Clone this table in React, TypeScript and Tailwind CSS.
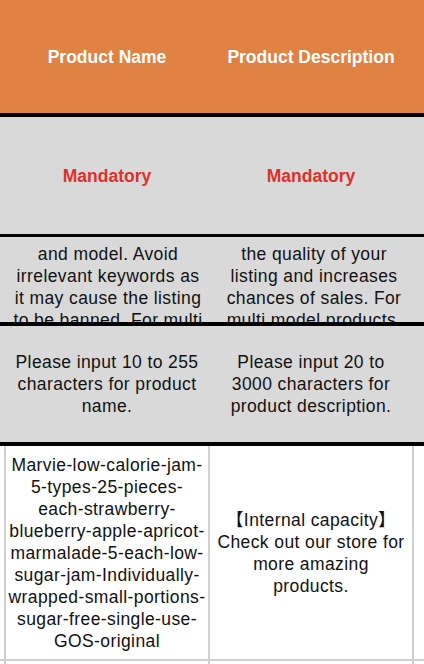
const font = "font-['Liberation_Sans','Noto_Sans_CJK_SC',sans-serif]"

const rowThree = [
  ['and model. Avoid', 'irrelevant keywords as', 'it may cause the listing', 'to be banned. For multi'],
  ['the quality of your', 'listing and increases', 'chances of sales. For', 'multi model products,']
]

const productName = [
  'Marvie-low-calorie-jam-',
  '5-types-25-pieces-',
  'each-strawberry-',
  'blueberry-apple-apricot-',
  'marmalade-5-each-low-',
  'sugar-jam-Individually-',
  'wrapped-small-portions-',
  'sugar-free-single-use-',
  'GOS-original'
]

const productDesc = ['【Internal capacity】', 'Check out our store for', 'more amazing', 'products.']

function Lines({ lines }: { lines: string[] }) {
  return (
    <div className="text-center">
      {lines.map((l) => (
        <div key={l} className="whitespace-nowrap">{l}</div>
      ))}
    </div>
  )
}

function Row({ h, bg, grid, border, children }: any) {
  const [a, b] = children
  return (
    <div className={`flex ${h} ${bg} ${border}`}>
      <div className={`w-[6px] shrink-0 border-r-2 ${grid}`} />
      <div className={`flex w-[204px] shrink-0 items-center justify-center overflow-hidden border-r-2 ${grid}`}>{a}</div>
      <div className={`flex w-[204px] shrink-0 items-center justify-center overflow-hidden border-r-2 ${grid}`}>{b}</div>
      <div className="flex-1" />
    </div>
  )
}

export default function App() {
  return (
    <div className={`h-[664px] w-[424px] overflow-hidden bg-white ${font} text-[17.5px] leading-[22px] tracking-[0.4px] text-[#111]`}>
      <Row h="h-[117px]" bg="bg-[#e08244]" grid="border-[#e08244]" border="border-b-4 border-b-black">
        <span className="font-bold tracking-normal text-white">Product Name</span>
        <span className="font-bold tracking-normal text-white">Product Description</span>
      </Row>

      <Row h="h-[120px]" bg="bg-[#d9d9d9]" grid="border-[#d9d9d9]" border="border-b-[3px] border-b-black">
        <span className="font-bold tracking-normal text-[#e0302a]">Mandatory</span>
        <span className="font-bold tracking-normal text-[#e0302a]">Mandatory</span>
      </Row>

      {/* guideline row, text runs past the cell and gets clipped */}
      <div className="flex h-[89px] border-b-4 border-b-black bg-[#d9d9d9]">
        <div className="w-[6px] shrink-0" />
        <div className="h-full w-[204px] shrink-0 overflow-hidden pt-[6px]">
          <Lines lines={rowThree[0]} />
        </div>
        <div className="ml-[2px] h-full w-[204px] shrink-0 overflow-hidden pt-[6px]">
          <Lines lines={rowThree[1]} />
        </div>
        <div className="flex-1" />
      </div>

      <Row h="h-[120px]" bg="bg-[#d9d9d9]" grid="border-[#d9d9d9]" border="border-b-4 border-b-black">
        <Lines lines={['Please input 10 to 255', 'characters for product', 'name.']} />
        <Lines lines={['Please input 20 to', '3000 characters for', 'product description.']} />
      </Row>

      <Row h="h-[215px]" bg="bg-white" grid="border-[#d0d0d0]" border="border-b-2 border-b-[#d0d0d0]">
        <Lines lines={productName} />
        <Lines lines={productDesc} />
      </Row>

      <Row h="h-[20px]" bg="bg-white" grid="border-[#d0d0d0]" border="">
        <span />
        <span />
      </Row>
    </div>
  )
}
